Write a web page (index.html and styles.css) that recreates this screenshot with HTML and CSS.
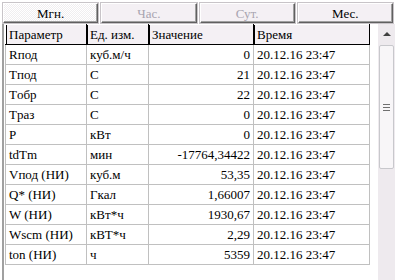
FILE: index.html
```html
<!DOCTYPE html>
<html lang="ru">
<head>
  <meta charset="UTF-8">
  <title>Параметры</title>
  <link rel="stylesheet" href="styles.css">
</head>
<body>

<div class="panel">
  <div class="tabs">
    <button class="tab active">Мгн.</button>
    <button class="tab" disabled>Час.</button>
    <button class="tab" disabled>Сут.</button>
    <button class="tab">Мес.</button>
  </div>

  <div class="grid-area">
    <div class="grid-frame">
      <table class="grid">
        <colgroup>
          <col class="c-name">
          <col class="c-unit">
          <col class="c-value">
          <col class="c-time">
        </colgroup>
        <thead>
          <tr>
            <th>Параметр</th>
            <th>Ед. изм.</th>
            <th>Значение</th>
            <th>Время</th>
          </tr>
        </thead>
        <tbody>
          <tr><td>Rпод</td><td>куб.м/ч</td><td class="num">0</td><td>20.12.16 23:47</td></tr>
          <tr><td>Tпод</td><td>C</td><td class="num">21</td><td>20.12.16 23:47</td></tr>
          <tr><td>Tобр</td><td>C</td><td class="num">22</td><td>20.12.16 23:47</td></tr>
          <tr><td>Tраз</td><td>C</td><td class="num">0</td><td>20.12.16 23:47</td></tr>
          <tr><td>P</td><td>кВт</td><td class="num">0</td><td>20.12.16 23:47</td></tr>
          <tr><td>tdTm</td><td>мин</td><td class="num">-17764,34422</td><td>20.12.16 23:47</td></tr>
          <tr><td>Vпод (НИ)</td><td>куб.м</td><td class="num">53,35</td><td>20.12.16 23:47</td></tr>
          <tr><td>Q* (НИ)</td><td>Гкал</td><td class="num">1,66007</td><td>20.12.16 23:47</td></tr>
          <tr><td>W (НИ)</td><td>кВт*ч</td><td class="num">1930,67</td><td>20.12.16 23:47</td></tr>
          <tr><td>Wscm (НИ)</td><td>кВТ*ч</td><td class="num">2,29</td><td>20.12.16 23:47</td></tr>
          <tr><td>ton (НИ)</td><td>ч</td><td class="num">5359</td><td>20.12.16 23:47</td></tr>
        </tbody>
      </table>
    </div>

    <div class="scrollbar">
      <div class="arrow-up"></div>
      <div class="thumb"><span class="grip"></span></div>
    </div>
  </div>
</div>

</body>
</html>
```

FILE: styles.css
```css
body {
  margin: 0;
  background: #ffffff;
  font-family: "Liberation Serif", serif;
  font-size: 13px;
  color: #000000;
}

.panel {
  width: 395px;
  height: 280px;
  overflow: hidden;
}

.tabs {
  display: flex;
  gap: 3px;
  padding: 3px 2px 0 3px;
  height: 20px;
}

.tab {
  flex: 1;
  font-family: "Liberation Serif", serif;
  font-size: 13px;
  padding: 1px 0 0;
  background: #f4f0f4;
  color: #000000;
  border: 1px solid;
  border-color: #ffffff #606060 #606060 #ffffff;
  box-shadow: inset -1px -1px 0 #a0a0a0;
  outline: 1px solid #c8c4c8;
}

.tab.active {
  background-color: #ffffff;
  background-image: repeating-conic-gradient(#f0eef0 0 25%, #ffffff 0 50%);
  background-size: 2px 2px;
}

.tab:disabled {
  color: #a8a4b0;
}

.grid-area {
  display: flex;
  margin-top: 1px;
  height: 256px;
}

.grid-frame {
  width: 365px;
  border-left: 2px solid #a0a0a0;
  margin-left: 2px;
  padding-left: 1px;
}

.grid {
  border-collapse: collapse;
  table-layout: fixed;
  width: 365px;
  font-family: "Liberation Serif", serif;
  font-size: 13px;
}

.c-name { width: 81px; }
.c-unit { width: 62px; }
.c-value { width: 105px; }
.c-time { width: 116px; }

.grid th {
  height: 19px;
  padding: 0 3px;
  text-align: left;
  font-weight: normal;
  background: #f4f0f4;
  border: 1px solid #000000;
  border-top-color: #ffffff;
  border-left-color: #ffffff;
  box-shadow: inset 1px 0 0 #000000;
}

.grid td {
  height: 19px;
  padding: 0 3px;
  border: 1px solid #c0c0c0;
  white-space: nowrap;
  overflow: hidden;
}

.grid td.num {
  text-align: right;
}

.scrollbar {
  margin-left: 8px;
  width: 18px;
  background: #eeeaee;
}

.arrow-up {
  width: 0;
  height: 0;
  margin: 8px auto 0;
  border-left: 4px solid transparent;
  border-right: 4px solid transparent;
  border-bottom: 4px solid #404040;
}

.thumb {
  margin: 9px 1px 0;
  height: 122px;
  background: #f8f6f8;
  border: 1px solid #c8c8cc;
  border-radius: 2px;
  display: flex;
  align-items: center;
  justify-content: center;
}

.grip {
  width: 7px;
  height: 5px;
  border-top: 1px solid #707070;
  border-bottom: 1px solid #707070;
  background: linear-gradient(#707070, #707070) center / 7px 1px no-repeat;
}
```
